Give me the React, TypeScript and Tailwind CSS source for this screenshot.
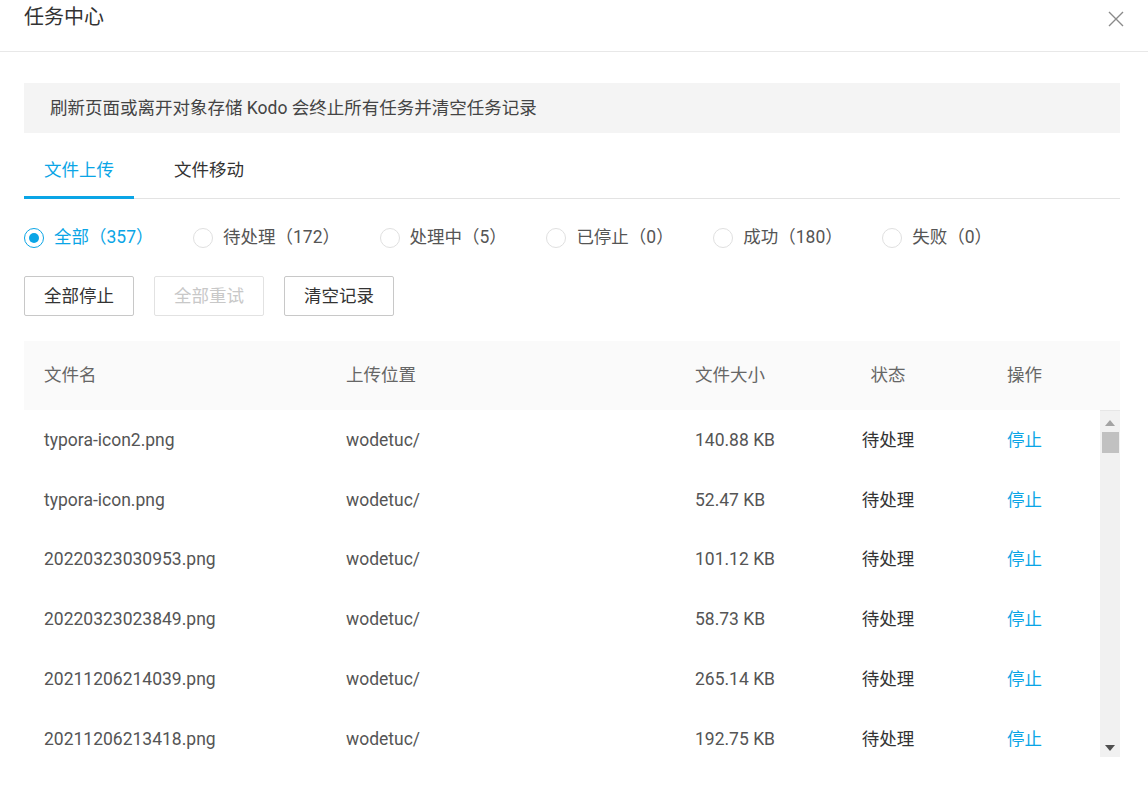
import React from "react";

const BLUE = "#0aa5e6";

const rows = [
  ["typora-icon2.png", "wodetuc/", "140.88 KB"],
  ["typora-icon.png", "wodetuc/", "52.47 KB"],
  ["20220323030953.png", "wodetuc/", "101.12 KB"],
  ["20220323023849.png", "wodetuc/", "58.73 KB"],
  ["20211206214039.png", "wodetuc/", "265.14 KB"],
  ["20211206213418.png", "wodetuc/", "192.75 KB"],
];

const radios = [
  ["全部（357）", true],
  ["待处理（172）", false],
  ["处理中（5）", false],
  ["已停止（0）", false],
  ["成功（180）", false],
  ["失败（0）", false],
] as const;

export default function App() {
  return (
    <div
      className="w-[1148px] h-[791px] bg-white overflow-hidden text-[17.5px] text-[#333]"
      style={{ fontFamily: 'Roboto, "Noto Sans CJK SC", sans-serif' }}
    >
      {/* header */}
      <div className="h-[52px] border-b border-[#e8e8e8] flex items-start justify-between pl-[24px] pr-[24px]">
        <div className="text-[20px] leading-[28px] mt-[3px] text-[#333]">任务中心</div>
        <svg width="16" height="16" viewBox="0 0 16 16" className="mt-[11px]">
          <path d="M1 1 L15 15 M15 1 L1 15" stroke="#8a8a8a" strokeWidth="1.4" fill="none" />
        </svg>
      </div>

      <div className="pl-[24px] pr-[28px]">
        {/* notice */}
        <div className="mt-[31px] h-[50px] bg-[#f4f4f4] flex items-center pl-[26px] text-[#444] leading-[25px]">
          刷新页面或离开对象存储 Kodo 会终止所有任务并清空任务记录
        </div>

        {/* tabs */}
        <div className="flex border-b border-[#e3e3e3]">
          <div className="relative px-[20px] pt-[25px] pb-[15px] leading-[25px]" style={{ color: BLUE }}>
            文件上传
            <div className="absolute left-0 right-0 -bottom-px h-[3px]" style={{ background: BLUE }} />
          </div>
          <div className="ml-[20px] px-[20px] pt-[25px] pb-[15px] leading-[25px] text-[#333]">文件移动</div>
        </div>

        {/* radios */}
        <div className="flex items-center mt-[26px] leading-[25px]">
          {radios.map(([label, checked]) => (
            <div key={label} className="flex items-center mr-[39.5px]">
              <span
                className="w-[20px] h-[20px] rounded-full border flex items-center justify-center"
                style={{ borderColor: checked ? BLUE : "#e0e0e0" }}
              >
                {checked && <span className="w-[10px] h-[10px] rounded-full" style={{ background: BLUE }} />}
              </span>
              <span className="ml-[10px]" style={{ color: checked ? BLUE : "#555" }}>
                {label}
              </span>
            </div>
          ))}
        </div>

        {/* buttons */}
        <div className="flex gap-[20px] mt-[26px]">
          <button className="w-[110px] h-[40px] border border-[#c8c8c8] rounded-[2px] text-[#333] bg-white">全部停止</button>
          <button className="w-[110px] h-[40px] border border-[#e2e2e2] rounded-[2px] text-[#c8c8c8] bg-white">全部重试</button>
          <button className="w-[110px] h-[40px] border border-[#c8c8c8] rounded-[2px] text-[#333] bg-white">清空记录</button>
        </div>

        {/* table */}
        <div className="mt-[25px]">
          <div className="h-[69px] bg-[#fafafa] grid grid-cols-[302px_349px_150px_126px_1fr] items-center text-[#666]">
            <div className="pl-[20px]">文件名</div>
            <div className="pl-[20px]">上传位置</div>
            <div className="pl-[20px]">文件大小</div>
            <div className="text-center">状态</div>
            <div className="pl-[56px]">操作</div>
          </div>
          <div className="flex h-[347px]">
            <div className="flex-1 overflow-hidden">
              {rows.map(([name, loc, size]) => (
                <div key={name} className="h-[59.8px] grid grid-cols-[302px_349px_150px_126px_1fr] items-center">
                  <div className="pl-[20px] text-[#555]">{name}</div>
                  <div className="pl-[20px] text-[#555]">{loc}</div>
                  <div className="pl-[20px] text-[#555]">{size}</div>
                  <div className="text-center text-[#333]">待处理</div>
                  <div className="pl-[56px]" style={{ color: BLUE }}>停止</div>
                </div>
              ))}
            </div>
            {/* scrollbar */}
            <div className="w-[20px] bg-[#f1f1f1] border-t border-[#e6e6e6] flex flex-col items-center">
              <svg width="10" height="6" viewBox="0 0 10 6" className="mt-[9px]">
                <path d="M0 6 L5 0 L10 6 Z" fill="#a3a3a3" />
              </svg>
              <div className="w-[17px] h-[21px] bg-[#c1c1c1] mt-[6px]" />
              <div className="flex-1" />
              <svg width="10" height="6" viewBox="0 0 10 6" className="mb-[6px]">
                <path d="M0 0 L10 0 L5 6 Z" fill="#505050" />
              </svg>
            </div>
          </div>
        </div>
      </div>
    </div>
  );
}
